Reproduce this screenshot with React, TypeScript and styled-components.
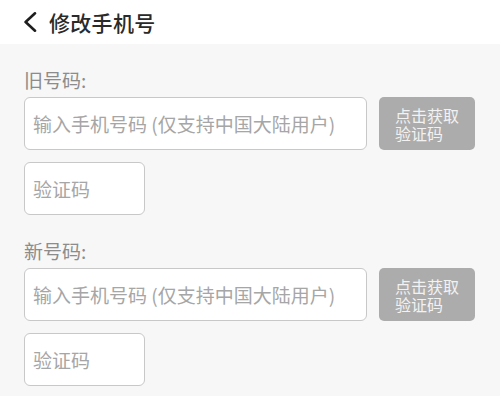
import React from "react";
import styled, { createGlobalStyle } from "styled-components";

const GlobalStyle = createGlobalStyle`
  html, body {
    margin: 0;
    padding: 0;
    background: #f7f7f7;
    font-family: "Noto Sans CJK SC", "Noto Sans", sans-serif;
  }
  * { box-sizing: border-box; }
`;

const Page = styled.div`
  width: 500px;
  min-height: 396px;
  background: #f7f7f7;
`;

const Header = styled.div`
  height: 44px;
  background: #ffffff;
  display: flex;
  align-items: center;
  padding-left: 22px;
  gap: 11px;
`;

const BackButton = styled.button`
  border: none;
  background: none;
  padding: 0;
  width: 16px;
  height: 24px;
  display: flex;
  align-items: center;
  justify-content: center;
  cursor: pointer;
`;

const Title = styled.h1`
  margin: 0;
  font-size: 21px;
  font-weight: 500;
  color: #2a2a2a;
  line-height: 28px;
  letter-spacing: 0.3px;
`;

const Content = styled.div`
  padding: 24px 25px 0 24px;
  display: flex;
  flex-direction: column;
  gap: 24px;
`;

const Section = styled.div`
  display: flex;
  flex-direction: column;
`;

const Label = styled.div`
  font-size: 19px;
  line-height: 24px;
  color: #8c8c8c;
  margin-bottom: 5px;
`;

const Row = styled.div`
  display: flex;
  gap: 12px;
`;

const TextInput = styled.input<{ $width?: number }>`
  ${(p) => (p.$width ? `width: ${p.$width}px;` : "flex: 1; min-width: 0;")}
  height: 53px;
  border: 1px solid #c8c8c8;
  border-radius: 6px;
  background: #ffffff;
  padding: 0 8px;
  font-family: "Noto Sans CJK SC", "Noto Sans", sans-serif;
  font-size: 19px;
  color: #333;
  outline: none;
  &::placeholder {
    color: #a6a6a6;
  }
`;

const CodeInput = styled(TextInput)`
  margin-top: 12px;
`;

const SendButton = styled.button`
  width: 96px;
  height: 53px;
  border: none;
  border-radius: 5px;
  background: #acacac;
  color: #f2f2f2;
  font-family: "Noto Sans CJK SC", "Noto Sans", sans-serif;
  font-size: 16px;
  line-height: 18px;
  padding: 0 12px 0 16px;
  text-align: left;
  cursor: pointer;
`;

const ChevronLeft = () => (
  <svg width="14" height="20" viewBox="0 0 14 20" fill="none">
    <path d="M12 1.3 L2.6 10 L12 18.7" stroke="#1e1e1e" strokeWidth="2.6" strokeLinecap="round" strokeLinejoin="round" />
  </svg>
);

const PhoneSection = ({ label }: { label: string }) => (
  <Section>
    <Label>{label}</Label>
    <Row>
      <TextInput placeholder="输入手机号码 (仅支持中国大陆用户)" />
      <SendButton>点击获取验证码</SendButton>
    </Row>
    <CodeInput $width={121} placeholder="验证码" />
  </Section>
);

export default function App() {
  return (
    <Page>
      <GlobalStyle />
      <Header>
        <BackButton>
          <ChevronLeft />
        </BackButton>
        <Title>修改手机号</Title>
      </Header>
      <Content>
        <PhoneSection label="旧号码:" />
        <PhoneSection label="新号码:" />
      </Content>
    </Page>
  );
}
